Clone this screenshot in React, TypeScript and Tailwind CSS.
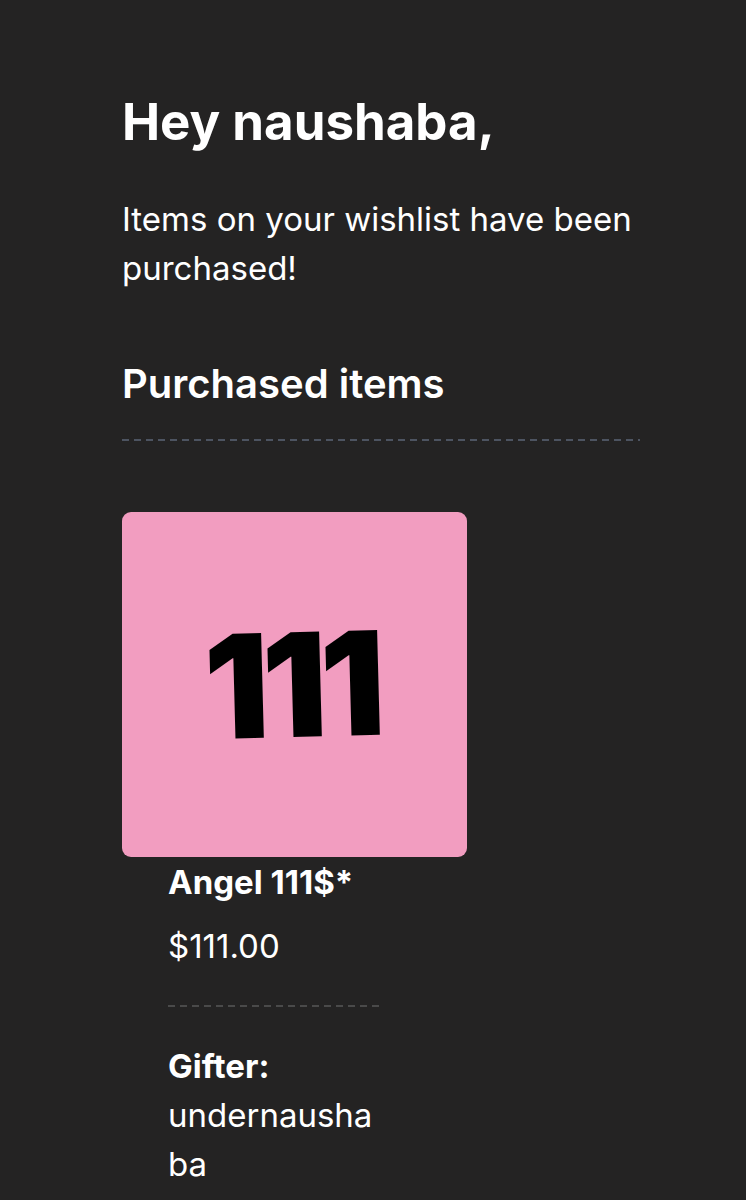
import React from "react";

const font = { fontFamily: "Inter, 'Noto Sans', 'Liberation Sans', sans-serif" };

export default function App() {
  return (
    <div className="min-h-[1200px] w-full bg-[#242323] text-white" style={font}>
      <div className="pl-[122px] pt-[92px] w-[640px]">
        <h1 className="text-[51px] leading-[60px] font-bold">Hey naushaba,</h1>
        <p className="mt-[43px] text-[33px] leading-[49px] font-normal">
          Items on your wishlist have been purchased!
        </p>
        <h2 className="mt-[66px] text-[40px] leading-[50px] font-semibold">Purchased items</h2>
        <div className="mt-[30px] h-[2px] w-[518px] bg-[repeating-linear-gradient(to_right,#4d5461_0_7px,transparent_7px_12px)]" />
        <div className="mt-[71px] w-[345px] h-[345px] rounded-[9px] bg-[#f29dc0] flex items-center justify-center">
          <span className="text-[144px] leading-none font-black text-black tracking-[-7px] -rotate-[1.5deg] pr-[6px]">111</span>
        </div>
        <div className="pl-[46px] w-[258px]">
          <div className="text-[33px] leading-[50px] font-bold">Angel 111$*</div>
          <div className="mt-[14px] text-[33px] leading-[50px]">$111.00</div>
          <div className="mt-[34px] h-[2px] w-[212px] bg-[repeating-linear-gradient(to_right,#4a4a4a_0_7px,transparent_7px_12px)]" />
          <div className="mt-[34px] text-[33px] leading-[50px] font-bold">Gifter:</div>
          <div className="text-[33px] leading-[49px] break-all w-[212px]">undernaushaba</div>
        </div>
      </div>
    </div>
  );
}
